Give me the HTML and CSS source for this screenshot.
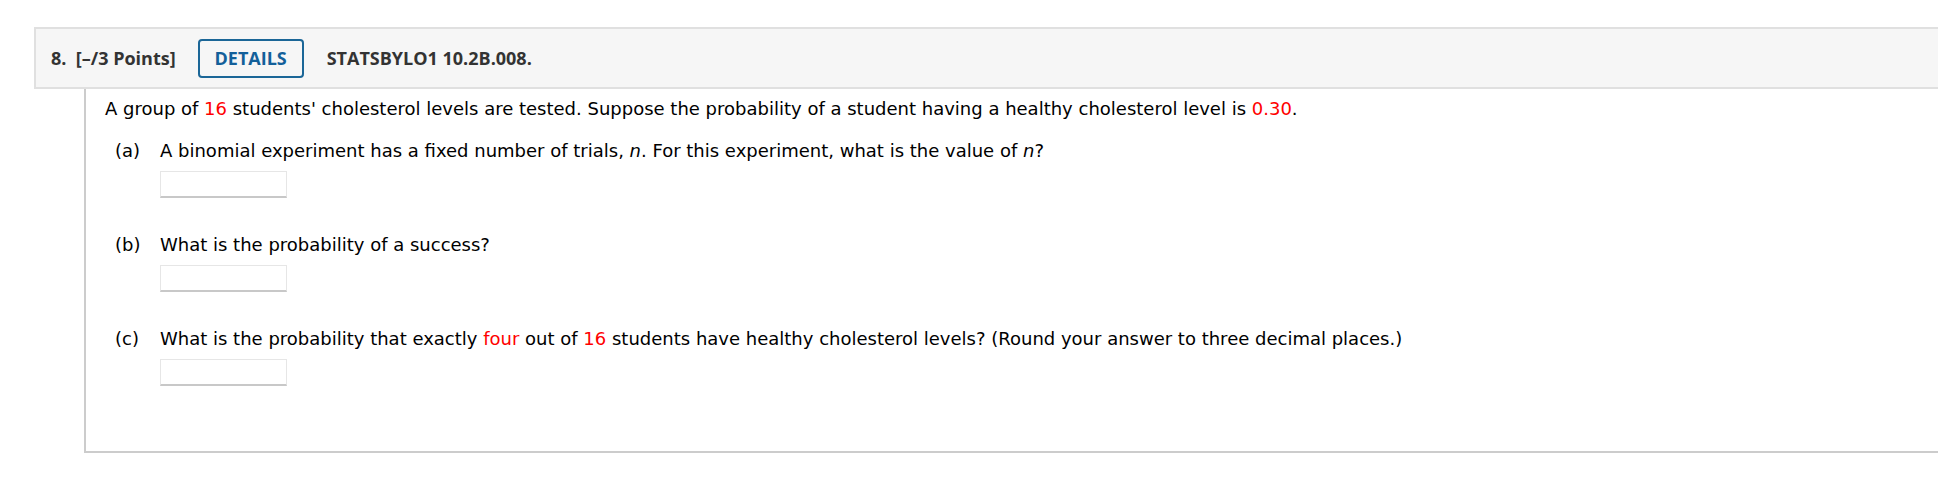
FILE: index.html
```html
<!DOCTYPE html>
<html>
<head>
<meta charset="utf-8">
<link rel="stylesheet" href="styles.css">
</head>
<body>
<div class="page">
  <div class="qhead">
    <span class="qnum">8.&nbsp; [–/3 Points]</span>
    <span class="details">DETAILS</span>
    <span class="qid">STATSBYLO1 10.2B.008.</span>
  </div>
  <div class="qbody">
    <p class="intro">A group of <span class="red">16</span> students' cholesterol levels are tested. Suppose the probability of a student having a healthy cholesterol level is <span class="red">0.30</span>.</p>
    <div class="part">
      <div class="label">(a)</div>
      <div class="content">
        <div class="ptext">A binomial experiment has a fixed number of trials, <i>n</i>. For this experiment, what is the value of <i>n</i>?</div>
        <div class="answer"></div>
      </div>
    </div>
    <div class="part">
      <div class="label">(b)</div>
      <div class="content">
        <div class="ptext">What is the probability of a success?</div>
        <div class="answer"></div>
      </div>
    </div>
    <div class="part">
      <div class="label">(c)</div>
      <div class="content">
        <div class="ptext">What is the probability that exactly <span class="red">four</span> out of <span class="red">16</span> students have healthy cholesterol levels? (Round your answer to three decimal places.)</div>
        <div class="answer"></div>
      </div>
    </div>
  </div>
</div>
</body>
</html>
```

FILE: styles.css
```css
html, body {
  margin: 0;
  padding: 0;
  background: #ffffff;
}
.page {
  padding-top: 27px;
  width: 1938px;
  overflow: hidden;
}
.qhead {
  margin-left: 34px;
  height: 58px;
  background: #f6f6f6;
  border: 2px solid #e0e0e0;
  border-right: none;
  display: flex;
  align-items: center;
  font-family: "Open Sans", "DejaVu Sans", sans-serif;
  font-weight: 700;
  font-size: 18px;
  color: #333333;
}
.qnum {
  margin-left: 15px;
  white-space: pre;
}
.details {
  margin-left: 22px;
  width: 106px;
  height: 39px;
  box-sizing: border-box;
  border: 2px solid #1b6697;
  border-radius: 4px;
  color: #13609a;
  display: flex;
  align-items: center;
  justify-content: center;
  font-size: 18px;
}
.qid {
  margin-left: 23px;
}
.qbody {
  margin-left: 84px;
  border-left: 2px solid #cccccc;
  border-bottom: 2px solid #cccccc;
  height: 362px;
  box-sizing: content-box;
  padding-left: 19px;
  font-family: "DejaVu Sans", Verdana, sans-serif;
  font-size: 18px;
  line-height: 22px;
  color: #000000;
}
.intro {
  margin: 0;
  padding-top: 9px;
}
.red {
  color: #ff0000;
}
.part {
  display: flex;
}
.intro + .part {
  margin-top: 20px;
}
.part + .part {
  margin-top: 36px;
}
.label {
  width: 55px;
  padding-left: 10px;
  box-sizing: border-box;
}
.answer {
  margin-top: 9px;
  width: 127px;
  height: 27px;
  box-sizing: border-box;
  border: 1px solid #e6e6e6;
  border-bottom: 2px solid #c8c8c8;
  background: #ffffff;
}
```
